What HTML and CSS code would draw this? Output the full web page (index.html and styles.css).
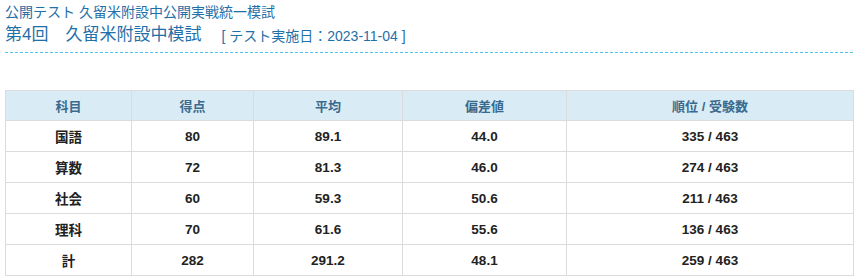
FILE: index.html
```html
<!DOCTYPE html>
<html lang="ja">
<head>
<meta charset="utf-8">
<link rel="stylesheet" href="styles.css">
</head>
<body>
<div class="wrap">
  <div class="head">
    <div class="series">公開テスト 久留米附設中公開実戦統一模試</div>
    <div class="title"><span class="name">第4回　久留米附設中模試</span><span class="date">[ テスト実施日：2023-11-04 ]</span></div>
  </div>
  <table class="scores">
    <colgroup>
      <col class="c1"><col class="c2"><col class="c3"><col class="c4"><col class="c5">
    </colgroup>
    <thead>
      <tr><th>科目</th><th>得点</th><th>平均</th><th>偏差値</th><th>順位 / 受験数</th></tr>
    </thead>
    <tbody>
      <tr><td>国語</td><td>80</td><td>89.1</td><td>44.0</td><td>335 / 463</td></tr>
      <tr><td>算数</td><td>72</td><td>81.3</td><td>46.0</td><td>274 / 463</td></tr>
      <tr><td>社会</td><td>60</td><td>59.3</td><td>50.6</td><td>211 / 463</td></tr>
      <tr><td>理科</td><td>70</td><td>61.6</td><td>55.6</td><td>136 / 463</td></tr>
      <tr><td>計</td><td>282</td><td>291.2</td><td>48.1</td><td>259 / 463</td></tr>
    </tbody>
  </table>
</div>
</body>
</html>
```

FILE: styles.css
```css
html, body {
  margin: 0;
  padding: 0;
  background: #fff;
}
body {
  font-family: "Liberation Sans", Arial, "Noto Sans CJK JP", sans-serif;
}
.wrap {
  width: 848px;
  margin-left: 5px;
}
.head {
  color: #1f6fa8;
  border-bottom: 1px dashed #4cc2ec;
  padding-top: 2px;
  padding-bottom: 5px;
}
.series {
  font-size: 14px;
  line-height: 21px;
  height: 21px;
}
.title {
  height: 24px;
  display: flex;
  align-items: center;
}
.name {
  font-size: 17px;
  line-height: 24px;
}
.date {
  font-size: 14px;
  line-height: 24px;
  margin-left: 20px;
  padding-top: 2px;
}
.scores {
  border-collapse: collapse;
  width: 848px;
  margin-top: 37px;
  table-layout: fixed;
}
.c1 { width: 126px; }
.c2 { width: 122px; }
.c3 { width: 149px; }
.c4 { width: 164px; }
.c5 { width: 287px; }
.scores th,
.scores td {
  border: 1px solid #dcdcdc;
  text-align: center;
  font-size: 13.5px;
  font-weight: bold;
  padding: 0;
}
.scores th {
  background: #d9ecf5;
  color: #3a6a8e;
  font-size: 13px;
  height: 29px;
}
.scores td {
  color: #222;
  height: 30px;
}
```
